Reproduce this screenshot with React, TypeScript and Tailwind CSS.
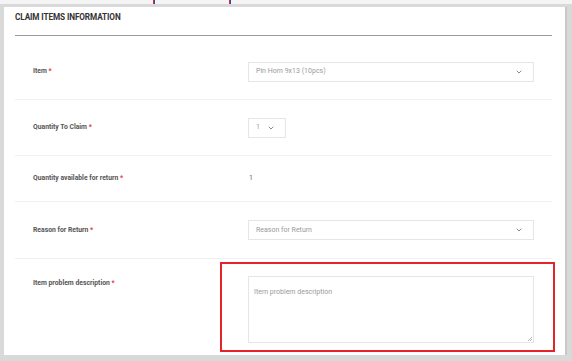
import React from 'react';

function Chevron() {
  return (
    <svg width="6" height="4" viewBox="0 0 6 4" fill="none" className="shrink-0">
      <path d="M1 1l2 2 2-2" stroke="#8a8a8a" strokeWidth="1" strokeLinecap="round" strokeLinejoin="round" />
    </svg>
  );
}

function Label({ text }: { text: string }) {
  return (
    <div className="w-[215px] shrink-0 pl-[18px] text-[6.8px] font-bold text-[#555]">
      {text} <span className="text-[#e53935]">*</span>
    </div>
  );
}

export default function App() {
  return (
    <div className="w-[572px] h-[361px] bg-[#d9d9d9] overflow-hidden font-['Roboto',sans-serif]">
      {/* top strip with scroll markers */}
      <div className="h-[4px] bg-[#f4f4f4] flex">
        <div className="ml-[153px] w-[1px] bg-[#d32f2f]" />
        <div className="w-[1px] bg-[#3949ab]" />
        <div className="ml-[74px] w-[1px] bg-[#d32f2f]" />
        <div className="w-[1px] bg-[#3949ab]" />
      </div>

      <div className="flex mt-[3px]">
        <div className="relative ml-[4px] w-[561px] h-[348px] bg-white pl-[11px] pr-[13px] pt-[4px]">
          {/* Header */}
          <div className="h-[25px] border-b border-[#9a9a9a] text-[8.2px] font-bold text-[#333] tracking-[-0.1px]">
            CLAIM ITEMS INFORMATION
          </div>

          {/* Item */}
          <div className="h-[64px] pt-[8px] flex items-center border-b border-[#f0f0f0]">
            <Label text="Item" />
            <div className="ml-[18px] w-[286px] h-[20px] border border-[#e6e6e6] flex items-center justify-between pl-[7px] pr-[11px] text-[7px] text-[#9a9a9a]">
              <span>Pin Horn 9x13 (10pcs)</span>
              <Chevron />
            </div>
          </div>

          {/* Quantity To Claim */}
          <div className="h-[56px] flex items-center border-b border-[#f0f0f0]">
            <Label text="Quantity To Claim" />
            <div className="ml-[18px] w-[38px] h-[20px] border border-[#e6e6e6] flex items-center justify-between pl-[7px] pr-[11px] text-[7px] text-[#9a9a9a]">
              <span>1</span>
              <Chevron />
            </div>
          </div>

          {/* Quantity available */}
          <div className="h-[46px] flex items-center border-b border-[#f0f0f0]">
            <Label text="Quantity available for return" />
            <div className="ml-[18px] text-[7px] text-[#666] pl-[1px]">1</div>
          </div>

          {/* Reason */}
          <div className="h-[57px] flex items-center border-b border-[#f0f0f0]">
            <Label text="Reason for Return" />
            <div className="ml-[18px] w-[286px] h-[20px] border border-[#e6e6e6] flex items-center justify-between pl-[7px] pr-[11px] text-[7px] text-[#9a9a9a]">
              <span>Reason for Return</span>
              <Chevron />
            </div>
          </div>

          {/* Item problem description */}
          <div className="flex pt-[17px]">
            <div className="pt-[2px]">
              <Label text="Item problem description" />
            </div>
            <div className="relative ml-[18px] w-[286px] h-[67px] border border-[#e6e6e6] px-[5px] pt-[10px] text-[7px] text-[#9a9a9a]">
              Item problem description
              <svg width="5" height="5" viewBox="0 0 5 5" className="absolute right-[1px] bottom-[1px]">
                <path d="M1 5L5 1M3 5L5 3" stroke="#aaa" strokeWidth="0.8" />
              </svg>
            </div>
          </div>

          {/* annotation box */}
          <div className="absolute left-[216px] top-[255px] w-[335px] h-[90px] border-2 border-[#e3242b]" />
        </div>
        <div className="w-[2px] h-[348px] bg-[#c8c8c8]" />
      </div>
    </div>
  );
}
